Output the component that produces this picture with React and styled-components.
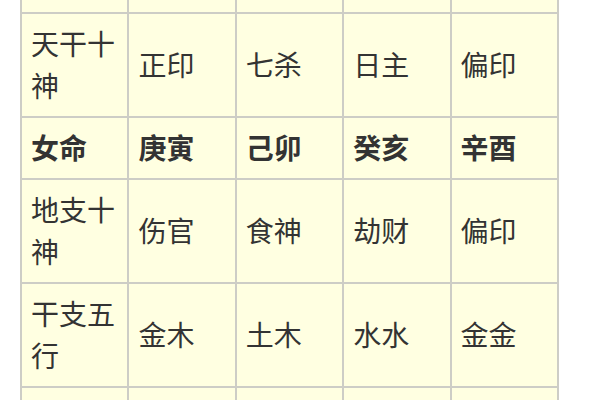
import React from 'react';
import styled, { createGlobalStyle } from 'styled-components';

const GlobalStyle = createGlobalStyle`
  html, body {
    margin: 0;
    padding: 0;
    background: #ffffff;
  }
`;

const Page = styled.div`
  width: 600px;
  height: 400px;
  overflow: hidden;
  background: #ffffff;
  padding-left: 20px;
  box-sizing: border-box;
`;

const Table = styled.table`
  border-collapse: collapse;
  table-layout: fixed;
  width: 539px;
  margin-top: -50px;
  background: #ffffe1;
  font-family: "Noto Sans CJK SC", "Noto Sans", sans-serif;
  font-size: 28px;
  line-height: 42px;
  color: #333333;
`;

const Cell = styled.td`
  border: 2px solid #cdcdc6;
  padding: 8px 9px 10px;
  vertical-align: middle;
  text-align: left;
  font-weight: ${(p) => (p.$bold ? 700 : 400)};
  word-break: break-all;
`;

const rows = [
  { bold: false, cells: ['', '', '', '', ''] },
  { bold: false, cells: ['天干十神', '正印', '七杀', '日主', '偏印'] },
  { bold: true, cells: ['女命', '庚寅', '己卯', '癸亥', '辛酉'] },
  { bold: false, cells: ['地支十神', '伤官', '食神', '劫财', '偏印'] },
  { bold: false, cells: ['干支五行', '金木', '土木', '水水', '金金'] },
  { bold: false, cells: ['', '', '', '', ''] },
];

const App = () => {
  return (
    <Page>
      <GlobalStyle />
      <Table>
        <tbody>
          {rows.map((row, i) => (
            <tr key={i}>
              {row.cells.map((c, j) => (
                <Cell key={j} $bold={row.bold}>
                  {c || '\u00a0'}
                </Cell>
              ))}
            </tr>
          ))}
        </tbody>
      </Table>
    </Page>
  );
};

export default App;
